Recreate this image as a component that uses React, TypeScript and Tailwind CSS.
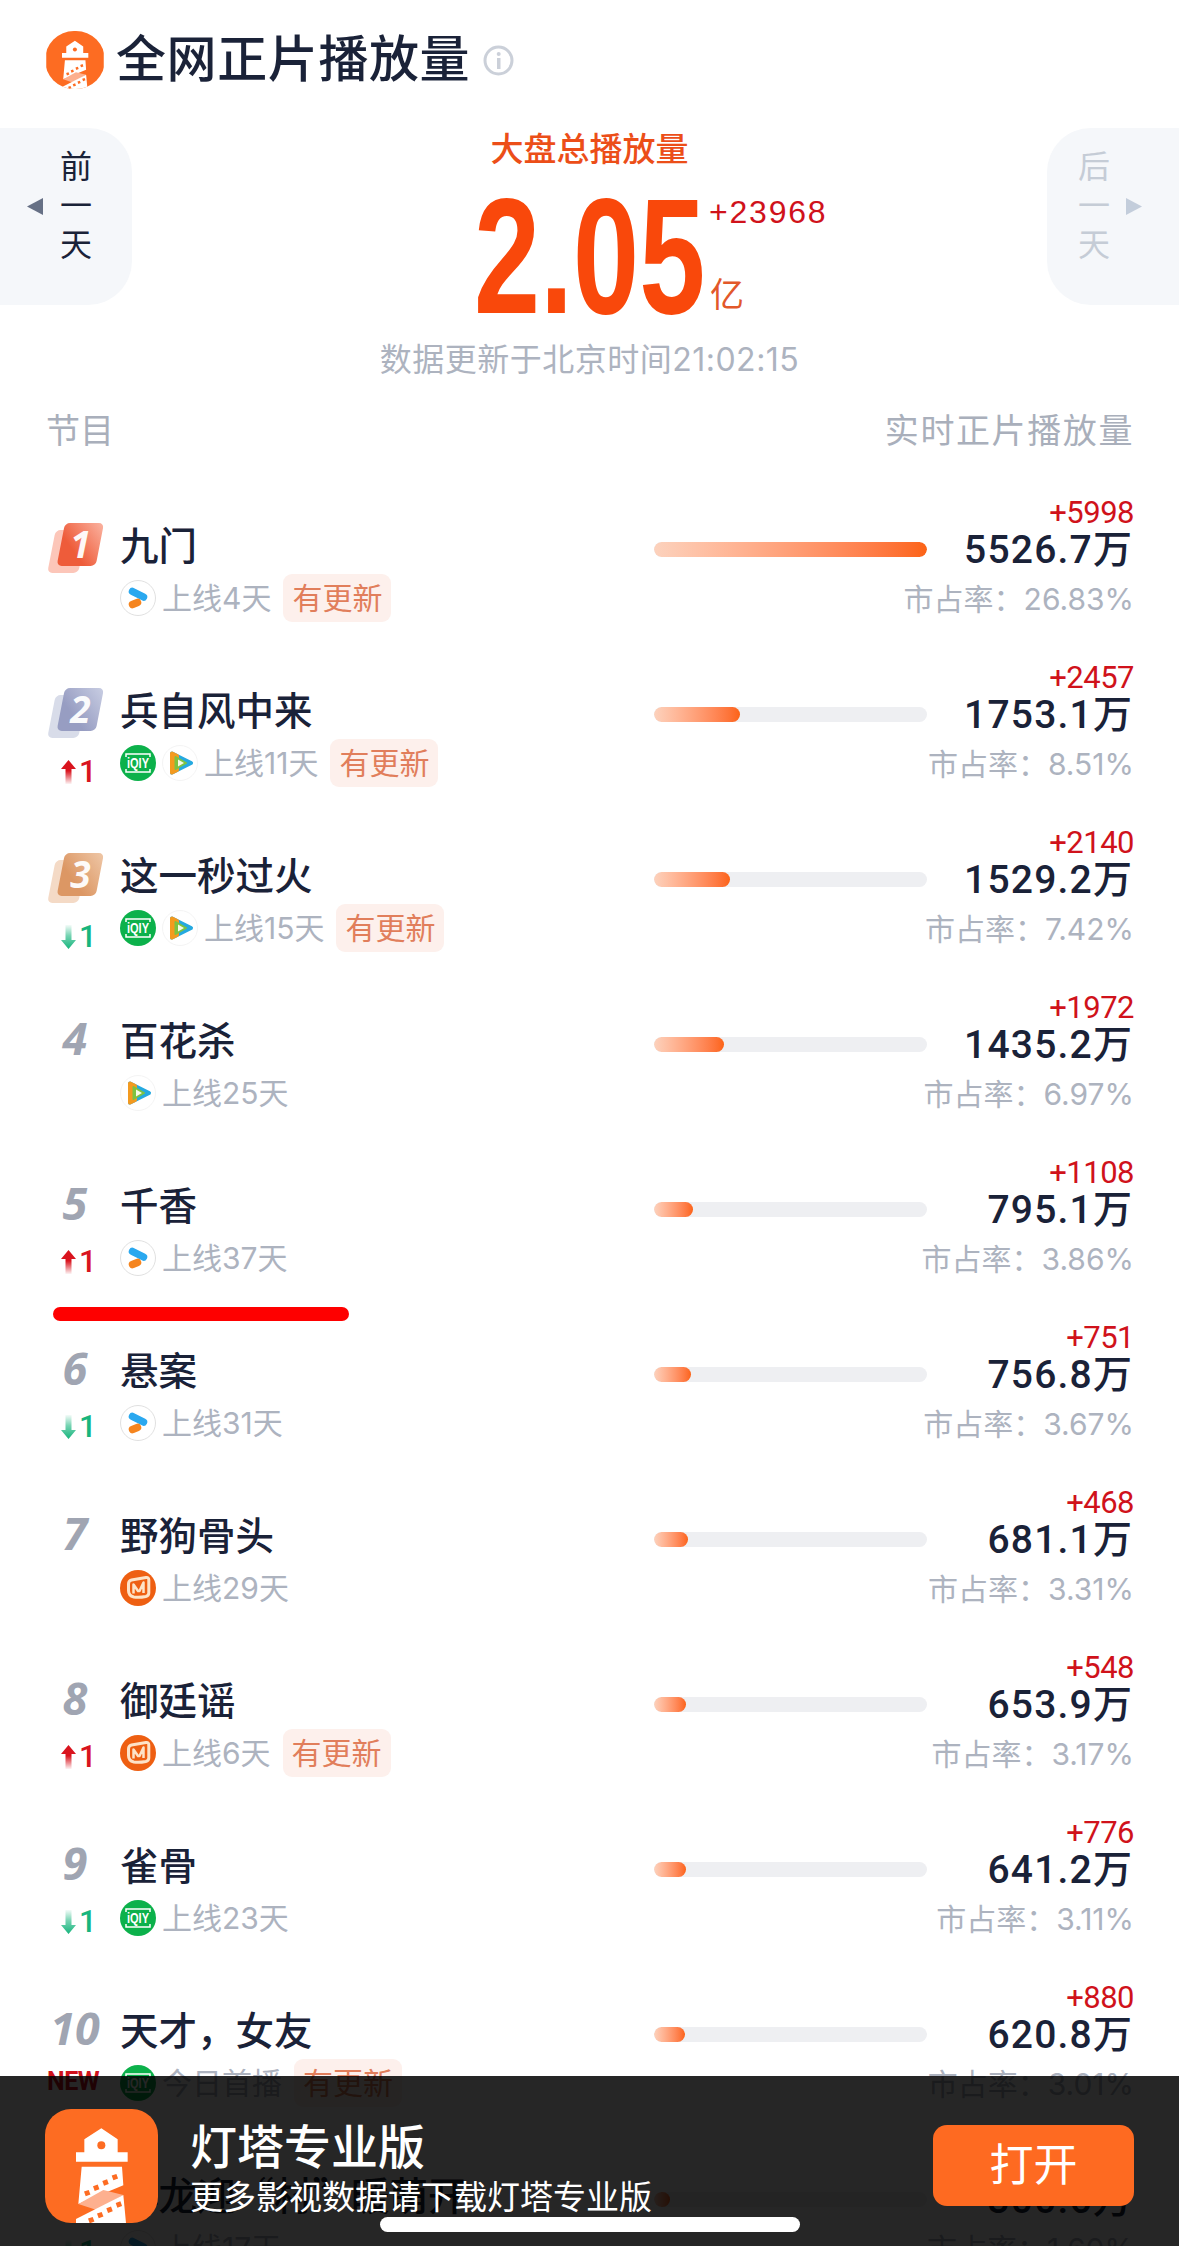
import React from 'react';

type Platform = 'youku' | 'iqiyi' | 'tencent' | 'mango';
type Change = 'up' | 'down' | 'new' | null;

interface Show {
  rank: number;
  name: string;
  platforms: Platform[];
  online: string;
  updated?: boolean;
  change: Change;
  delta: string;
  value: string;
  share: string;
  bar: number;
}

const shows: Show[] = [
  { rank: 1, name: '九门', platforms: ['youku'], online: '上线4天', updated: true, change: null, delta: '+5998', value: '5526.7', share: '26.83%', bar: 273 },
  { rank: 2, name: '兵自风中来', platforms: ['iqiyi', 'tencent'], online: '上线11天', updated: true, change: 'up', delta: '+2457', value: '1753.1', share: '8.51%', bar: 86 },
  { rank: 3, name: '这一秒过火', platforms: ['iqiyi', 'tencent'], online: '上线15天', updated: true, change: 'down', delta: '+2140', value: '1529.2', share: '7.42%', bar: 76 },
  { rank: 4, name: '百花杀', platforms: ['tencent'], online: '上线25天', change: null, delta: '+1972', value: '1435.2', share: '6.97%', bar: 70 },
  { rank: 5, name: '千香', platforms: ['youku'], online: '上线37天', change: 'up', delta: '+1108', value: '795.1', share: '3.86%', bar: 39 },
  { rank: 6, name: '悬案', platforms: ['youku'], online: '上线31天', change: 'down', delta: '+751', value: '756.8', share: '3.67%', bar: 37 },
  { rank: 7, name: '野狗骨头', platforms: ['mango'], online: '上线29天', change: null, delta: '+468', value: '681.1', share: '3.31%', bar: 34 },
  { rank: 8, name: '御廷谣', platforms: ['mango'], online: '上线6天', updated: true, change: 'up', delta: '+548', value: '653.9', share: '3.17%', bar: 32 },
  { rank: 9, name: '雀骨', platforms: ['iqiyi'], online: '上线23天', change: 'down', delta: '+776', value: '641.2', share: '3.11%', bar: 32 },
  { rank: 10, name: '天才，女友', platforms: ['iqiyi'], online: '今日首播', updated: true, change: 'new', delta: '+880', value: '620.8', share: '3.01%', bar: 31 },
  { rank: 11, name: '小龙迎“村”暖萌开', platforms: ['youku'], online: '上线17天', change: 'down', delta: '+412', value: '300.6', share: '1.60%', bar: 16 },
];

const badgeColors: Record<number, [string, string, string]> = {
  1: ['#ee5c3a', '#fbb5a3', '#fcc6b9'],
  2: ['#979dc2', '#c9cee3', '#d8dce9'],
  3: ['#dc9764', '#efc8a8', '#f4dac6'],
};

function Lighthouse({ className }: { className: string }) {
  return (
    <div className={className}>
      <svg viewBox="15 27 339 342" className="h-full w-full">
        <rect x="15" y="27" width="339" height="342" fill="#fd6c22" />
        <path d="M133 157V118L184 85l49 33v39zM108 157h155v28H108zM125 200h121l4 56-135 56z" fill="#fff" />
        <circle cx="184" cy="136" r="12" fill="#fd6c22" />
        <path d="M115 312l75-42 60 15-80 45z" fill="#fdb08f" />
        <path d="M250 285l8 84H108v-12z" fill="#fff" />
        <g fill="#fd6c22">
          <rect x="134" y="272" width="15" height="15" transform="rotate(-20 141 279)" />
          <rect x="161" y="256" width="15" height="15" transform="rotate(-20 168 263)" />
          <rect x="189" y="240" width="15" height="15" transform="rotate(-20 196 247)" />
          <rect x="217" y="224" width="15" height="15" transform="rotate(-20 224 231)" />
          <rect x="146" y="353" width="15" height="15" transform="rotate(-20 153 360)" />
          <rect x="173" y="338" width="15" height="15" transform="rotate(-20 180 345)" />
          <rect x="201" y="322" width="15" height="15" transform="rotate(-20 208 329)" />
          <rect x="229" y="306" width="15" height="15" transform="rotate(-20 236 313)" />
        </g>
      </svg>
    </div>
  );
}

function PlatformIcon({ type }: { type: Platform }) {
  if (type === 'youku') {
    return (
      <svg viewBox="0 0 36 36" className="h-9 w-9 shrink-0">
        <circle cx="18" cy="18" r="17.5" fill="#fff" stroke="#d8d8d8" strokeWidth="0.8" />
        <path d="M12.5 11.5L23.5 17" stroke="#2aa8ef" strokeWidth="7.5" strokeLinecap="round" />
        <path d="M12.5 24.5L17.5 22.5" stroke="#f5851f" strokeWidth="7.5" strokeLinecap="round" />
      </svg>
    );
  }
  if (type === 'iqiyi') {
    return (
      <svg viewBox="0 0 36 36" className="h-9 w-9 shrink-0">
        <circle cx="18" cy="18" r="18" fill="#0cb14b" />
        <path d="M6 12V9h24v3M6 24v3h24v-3" fill="none" stroke="#fff" strokeWidth="1.5" />
        <text x="18" y="23" textAnchor="middle" fill="#fff" fontSize="14" fontWeight="700" fontFamily="'Liberation Sans', sans-serif" textLength="22" lengthAdjust="spacingAndGlyphs">iQIY</text>
      </svg>
    );
  }
  if (type === 'tencent') {
    return (
      <svg viewBox="0 0 36 36" className="h-9 w-9 shrink-0">
        <circle cx="18" cy="18" r="17.5" fill="#fff" stroke="#f0f0f0" strokeWidth="0.8" />
        <path d="M10 8.500l19 9.500-19 9.500z" fill="#25a9e0" stroke="#25a9e0" strokeWidth="4" strokeLinejoin="round" />
        <path d="M10 8.500l5 2.500v14l-5 2.500z" fill="#f39a1f" stroke="#f39a1f" strokeWidth="4" strokeLinejoin="round" />
        <path d="M13.500 12l10.500 6-10.500 6z" fill="#7cc242" stroke="#7cc242" strokeWidth="2" strokeLinejoin="round" />
        <path d="M16 14.500l6 3.500-6 3.500z" fill="#f6fbe8" />
      </svg>
    );
  }
  return (
    <svg viewBox="0 0 36 36" className="h-9 w-9 shrink-0">
      <circle cx="18" cy="18" r="18" fill="#ee5f12" />
      <path d="M8.500 14c0-2 1-3.500 3-4l14.500-2.500c2-.3 2.800.7 2.800 2.500v13c0 2-1 3-3 3.500-5 1-9 1-12 .5-3.500-.8-5.300-3-5.300-6.500z" fill="none" stroke="#fde3c8" strokeWidth="3" />
      <path d="M13.500 23.500v-9l4.500 6.500 1.500 0 4-8.500v10.500" fill="none" stroke="#fde3c8" strokeWidth="2.500" strokeLinejoin="round" />
    </svg>
  );
}

function RankBadge({ rank }: { rank: number }) {
  const [front, light, back] = badgeColors[rank];
  return (
    <svg viewBox="0 0 57 50" className="ml-[2px] mt-[5px] h-[50px] w-[57px] overflow-visible">
      <defs>
        <linearGradient id={`badge${rank}`} x1="0" y1="1" x2="1" y2="0">
          <stop offset="0.35" stopColor={front} />
          <stop offset="1" stopColor={light} />
        </linearGradient>
      </defs>
      <rect x="10" y="7" width="31" height="43" rx="5" fill={back} transform="skewX(-11)" />
      <rect x="18" y="0" width="39" height="43" rx="5" fill={`url(#badge${rank})`} transform="skewX(-11)" />
      <text x="33.5" y="35" textAnchor="middle" fill="#fff" fontSize="37" fontWeight="700" fontStyle="italic" fontFamily="'Open Sans', sans-serif" opacity="0.95">{rank}</text>
    </svg>
  );
}

function ChangeMark({ change, id }: { change: Change; id: number }) {
  if (change === 'new') {
    return <div className="ml-[2px] mt-[16px] font-['Roboto',sans-serif] text-[25px] font-bold leading-[26px] tracking-[-0.5px] text-[#d0121b]">NEW</div>;
  }
  if (!change) return null;
  const up = change === 'up';
  const color = up ? '#d9141e' : '#17b57d';
  return (
    <div className="ml-[16px] mt-[19px] flex h-[30px] items-center">
      <svg viewBox="0 0 15 24" className="h-6 w-[15px]">
        <defs>
          <linearGradient id={`chg${id}`} x1="0" y1="0" x2="0" y2="1">
            <stop offset="0" stopColor={color} stopOpacity={up ? 1 : 0.05} />
            <stop offset="0.45" stopColor={color} stopOpacity={up ? 1 : 0.6} />
            <stop offset="1" stopColor={color} stopOpacity={up ? 0.05 : 1} />
          </linearGradient>
        </defs>
        {up ? (
          <path d="M7.500 0L15 9h-4.500v15h-6V9H0z" fill={`url(#chg${id})`} />
        ) : (
          <path d="M7.500 24L0 15h4.500V0h6v15H15z" fill={`url(#chg${id})`} />
        )}
      </svg>
      <span className="ml-[3px] font-['Roboto',sans-serif] text-[31px] font-medium leading-[30px]" style={{ color }}>1</span>
    </div>
  );
}

function Row({ show }: { show: Show }) {
  return (
    <div className="flex h-[165px] pl-[45px] pr-[45px]">
      <div className="w-[75px] shrink-0 pt-[22px]">
        <div className="h-[50px] w-[60px]">
          {show.rank <= 3 ? (
            <RankBadge rank={show.rank} />
          ) : (
            <div className="text-center font-['Open_Sans',sans-serif] text-[45px] font-bold italic leading-[50px] text-[#a0a5b2]">{show.rank}</div>
          )}
        </div>
        <ChangeMark change={show.change} id={show.rank} />
      </div>

      <div className="min-w-0 flex-1 pt-[22px]">
        <div className="h-[50px] whitespace-nowrap font-['Noto_Sans_CJK_SC',sans-serif] text-[38.5px] font-medium leading-[50px] text-[#1a2238]">{show.name}</div>
        <div className="mt-[6px] flex h-[48px] items-center">
          <div className="flex items-center gap-[6px]">
            {show.platforms.map((p) => (
              <PlatformIcon key={p} type={p} />
            ))}
          </div>
          <span className="ml-[6px] font-['Inter','Noto_Sans_CJK_SC',sans-serif] text-[30px] text-[#adb3bf]">{show.online}</span>
          {show.updated && (
            <span className="ml-[12px] flex h-[48px] w-[108px] items-center justify-center rounded-[9px] bg-[#fdf0ec] text-[30px] text-[#e17e5b]">有更新</span>
          )}
        </div>
      </div>

      <div className="mt-[46px] h-[15px] w-[273px] shrink-0 overflow-hidden rounded-full bg-[#eeeff2]">
        <div className="h-full rounded-full bg-gradient-to-r from-[#fcd2bd] to-[#fc6314]" style={{ width: show.bar }} />
      </div>

      <div className="flex w-[207px] shrink-0 flex-col items-end pt-[5px]">
        <div className="h-[24px] font-['Roboto',sans-serif] text-[31px] leading-[24px] tracking-[-0.5px] text-[#d0121b]">{show.delta}</div>
        <div className="mr-[2px] mt-[1px] h-[40px] whitespace-nowrap font-['Roboto',sans-serif] text-[39px] font-medium leading-[40px] tracking-[1.2px] text-[#1a2238]">
          {show.value}
          <span className="font-['Noto_Sans_CJK_SC',sans-serif] tracking-normal">万</span>
        </div>
        <div className="mt-[13px] h-[40px] whitespace-nowrap font-['Inter','Noto_Sans_CJK_SC',sans-serif] text-[30px] leading-[40px] text-[#adb3bf]">市占率：{show.share}</div>
      </div>
    </div>
  );
}

export default function App() {
  return (
    <div className="relative h-[2246px] overflow-hidden bg-white font-['Liberation_Sans','Noto_Sans_CJK_SC',sans-serif]">
      <div className="flex h-[89px] items-center pl-[45px] pt-[31px]">
        <Lighthouse className="h-[58px] w-[60px] shrink-0 overflow-hidden rounded-full" />
        <h1 className="ml-[11px] text-[50px] font-medium leading-[58px] tracking-[0.6px] text-[#1a2238]">全网正片播放量</h1>
        <svg viewBox="0 0 31 31" className="ml-[13px] h-[31px] w-[31px]">
          <circle cx="15.500" cy="15.500" r="13.500" fill="none" stroke="#cbd0d9" strokeWidth="3" />
          <rect x="14" y="13" width="3.500" height="11" fill="#cbd0d9" />
          <circle cx="15.700" cy="9" r="2" fill="#cbd0d9" />
        </svg>
      </div>

      <div className="mt-[39px] flex items-start">
        <div className="flex h-[177px] w-[132px] shrink-0 items-center rounded-r-[44px] bg-[#f5f7fa] pb-[20px] pl-[27px]">
          <svg viewBox="0 0 16 17" className="h-[17px] w-4"><path d="M0 8.500L16 0v17z" fill="#667085" /></svg>
          <div className="ml-[17px] w-8 text-[32px] leading-[39px] text-[#1a2238]">前<br />一<br />天</div>
        </div>

        <div className="flex-1">
          <div className="mt-[2px] text-center text-[33px] font-medium leading-[40px] text-[#ec4e18]">大盘总播放量</div>
          <div className="ml-[342px] mt-[27px] flex h-[118px]">
            <div className="h-[118px] w-[230px]">
              <span className="inline-block origin-top-left scale-x-[0.72] whitespace-nowrap text-[165px] font-bold leading-[118px] text-[#f9480b]">2.05</span>
            </div>
            <div className="ml-[5px] flex flex-col justify-between pb-[2px] pt-[3px]">
              <div className="text-[32px] leading-[24px] tracking-[1.8px] text-[#d0121b]">+23968</div>
              <div className="ml-[1px] text-[34px] leading-[36px] text-[#e2582a]">亿</div>
            </div>
          </div>
          <div className="mt-[25px] text-center font-['Inter','Noto_Sans_CJK_SC',sans-serif] text-[32px] leading-[40px] tracking-[0.5px] text-[#adb3bf]">数据更新于北京时间21:02:15</div>
        </div>

        <div className="flex h-[177px] w-[132px] shrink-0 items-center rounded-l-[44px] bg-[#f5f7fa] pb-[20px] pl-[31px]">
          <div className="w-8 text-[32px] leading-[39px] text-[#c5ccd6]">后<br />一<br />天</div>
          <svg viewBox="0 0 16 17" className="ml-[16px] h-[17px] w-4"><path d="M16 8.500L0 0v17z" fill="#c3cddb" /></svg>
        </div>
      </div>

      <div className="mt-[29px] flex h-[44px] items-center justify-between pl-[46px] pr-[45px] text-[34px] leading-[44px] text-[#a9afbb]">
        <span>节目</span>
        <span className="tracking-[1.6px]">实时正片播放量</span>
      </div>

      <div className="relative mt-[43px]">
        {shows.map((show) => (
          <Row key={show.rank} show={show} />
        ))}
        <div className="absolute left-[53px] top-[811px] h-[14px] w-[296px] rounded-full bg-[#fe0000]" />
      </div>

      <div className="absolute inset-x-0 bottom-0 h-[170px] bg-black/85">
        <div className="flex pl-[45px] pr-[45px] pt-[33px]">
          <Lighthouse className="h-[114px] w-[113px] shrink-0 overflow-hidden rounded-[26px]" />
          <div className="ml-[32px] text-white">
            <div className="mt-[14px] h-[50px] text-[47px] font-medium leading-[50px]">灯塔专业版</div>
            <div className="mt-[5px] h-[40px] text-[33px] leading-[40px]">更多影视数据请下载灯塔专业版</div>
          </div>
          <button className="ml-auto mt-[16px] h-[81px] w-[201px] rounded-[14px] bg-[#fe6a21] text-[44px] leading-[81px] text-white">打开</button>
        </div>
      </div>
      <div className="absolute bottom-[14px] left-[380px] h-[15px] w-[420px] rounded-full bg-white" />
    </div>
  );
}
